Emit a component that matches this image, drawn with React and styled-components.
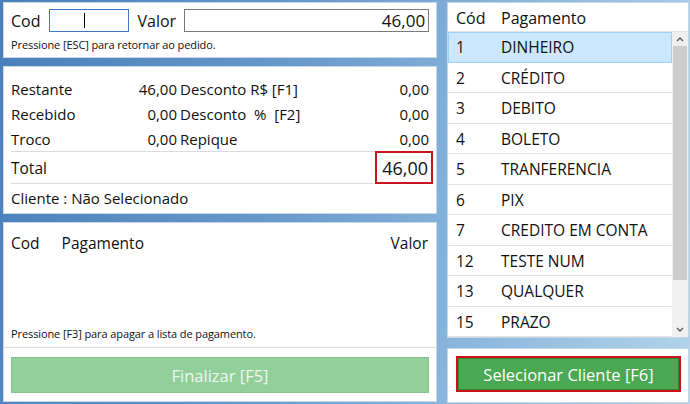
import React from "react";
import styled, { createGlobalStyle } from "styled-components";

const Global = createGlobalStyle`
  html, body { margin: 0; padding: 0; }
  body {
    width: 690px; height: 404px; overflow: hidden;
    font-family: "Open Sans", "Noto Sans", sans-serif;
    color: #111;
    background: linear-gradient(100deg, #4a7fba 0%, #6699cc 40%, #8cb8de 70%, #b3d4ea 100%);
  }
`;

const Screen = styled.div`
  display: grid;
  grid-template-columns: 434px 242px;
  column-gap: 10px;
  padding: 2px 0 0 3px;
  height: 402px;
  box-sizing: border-box;
`;

const Column = styled.div`
  display: flex;
  flex-direction: column;
  gap: ${(p) => p.$gap}px;
`;

const Panel = styled.div`
  background: #fff;
  border: 1px solid #c9d6e3;
  box-sizing: border-box;
  height: ${(p) => p.$h}px;
  display: flex;
  flex-direction: column;
`;

const InputRow = styled.div`
  display: flex;
  align-items: center;
  padding: 6px 0 0 7px;
  font-size: 16px;
`;

const Label = styled.span`
  font-size: 16px;
  margin-right: ${(p) => p.$mr || 0}px;
`;

const Field = styled.div`
  width: ${(p) => p.$w}px;
  height: 23px;
  box-sizing: border-box;
  border: 1px solid ${(p) => (p.$focus ? "#3b77c4" : "#7a7a7a")};
  display: flex;
  align-items: center;
  justify-content: ${(p) => (p.$focus ? "center" : "flex-end")};
  padding-right: 3px;
  font-size: 17px;
  margin-right: ${(p) => p.$mr || 0}px;
`;

const Caret = styled.div`
  width: 1px;
  height: 15px;
  background: #000;
  margin-right: 5px;
`;

const Hint = styled.div`
  font-size: 11px;
  padding-left: 7px;
  margin-top: ${(p) => p.$mt || 0}px;
  letter-spacing: -0.1px;
`;

const SummaryBody = styled.div`
  padding: 9px 7px 0 7px;
  display: flex;
  flex-direction: column;
`;

const SumRow = styled.div`
  display: grid;
  grid-template-columns: 70px 97px 1fr 60px;
  align-items: center;
  height: 25px;
  font-size: 15px;
`;

const Right = styled.span`
  text-align: right;
  padding-right: ${(p) => p.$pr || 0}px;
`;

const Left = styled.span`
  padding-left: ${(p) => p.$pl || 0}px;
  white-space: pre;
`;

const TotalRow = styled.div`
  display: flex;
  align-items: center;
  justify-content: space-between;
  height: 31px;
  border-top: 1px solid #dcdcdc;
  border-bottom: 1px solid #dcdcdc;
  font-size: 15.5px;
  margin-right: -4px;
`;

const TotalBox = styled.div`
  height: 33px;
  width: 58px;
  box-sizing: border-box;
  border: 2px solid #c8141e;
  background: #fff;
  font-size: 18px;
  display: flex;
  align-items: center;
  justify-content: flex-end;
  padding-right: 3px;
  margin: -1px 0;
`;

const ClientRow = styled.div`
  height: 28px;
  display: flex;
  align-items: center;
  font-size: 15px;
`;

const PayHeader = styled.div`
  display: flex;
  justify-content: space-between;
  padding: 9px 8px 0 7px;
  font-size: 15.5px;
`;

const HeadLeft = styled.div`
  display: flex;
  gap: 22px;
`;

const Spacer = styled.div`
  flex: 1;
`;

const Footer = styled.div`
  border-top: 1px solid #dcdcdc;
  padding: 9px 7px 8px 7px;
  margin-top: 6px;
  display: flex;
`;

const GreenButton = styled.div`
  flex: 1;
  height: 36px;
  box-sizing: border-box;
  display: flex;
  align-items: center;
  justify-content: center;
  font-size: 16.5px;
  color: ${(p) => (p.$disabled ? "#eef7ee" : "#fff")};
  background: ${(p) => (p.$disabled ? "#93cf9a" : "#4aa952")};
  border: ${(p) => (p.$disabled ? "1px solid #86c38d" : "2px solid #cf1018")};
  box-shadow: ${(p) => (p.$disabled ? "none" : "inset 0 0 0 1px #2f8a38")};
`;

const ListHeader = styled.div`
  display: flex;
  height: 31px;
  align-items: center;
  padding: 2px 0 0 8px;
  font-size: 16px;
  border-bottom: 1px solid #e4e4e4;
`;

const CodCell = styled.span`
  width: 45px;
  flex: none;
`;

const ListArea = styled.div`
  flex: 1;
  display: flex;
`;

const Rows = styled.div`
  flex: 1;
  display: flex;
  flex-direction: column;
`;

const Row = styled.div`
  height: 30.5px;
  box-sizing: border-box;
  display: flex;
  align-items: center;
  padding-left: 7px;
  font-size: 15.5px;
  border: 1px solid ${(p) => (p.$sel ? "#99d1ff" : "transparent")};
  border-bottom: 1px solid ${(p) => (p.$sel ? "#99d1ff" : "#e2e2e2")};
  background: ${(p) => (p.$sel ? "#cce8ff" : "#fff")};
`;

const Scrollbar = styled.div`
  width: 16px;
  display: flex;
  flex-direction: column;
  background: #f0f0f0;
`;

const Arrow = styled.div`
  height: 14px;
  display: flex;
  align-items: center;
  justify-content: center;
`;

const Track = styled.div`
  flex: 1;
  display: flex;
  flex-direction: column;
  padding: 0 1px;
`;

const Thumb = styled.div`
  height: 234px;
  background: #cdcdcd;
`;

const ButtonPanelBody = styled.div`
  padding: 7px 7px 6px 8px;
  display: flex;
  flex: 1;
`;

const Chevron = ({ up }) => (
  <svg width="8" height="6" viewBox="0 0 8 6">
    <path
      d={up ? "M1 5 L4 2 L7 5" : "M1 1 L4 4 L7 1"}
      fill="none"
      stroke="#555"
      strokeWidth="1.3"
    />
  </svg>
);

const payments = [
  ["1", "DINHEIRO"],
  ["2", "CRÉDITO"],
  ["3", "DEBITO"],
  ["4", "BOLETO"],
  ["5", "TRANFERENCIA"],
  ["6", "PIX"],
  ["7", "CREDITO EM CONTA"],
  ["12", "TESTE NUM"],
  ["13", "QUALQUER"],
  ["15", "PRAZO"],
];

export default function App() {
  return (
    <>
      <Global />
      <Screen>
        <Column $gap={8}>
          <Panel $h={56}>
            <InputRow>
              <Label $mr={8}>Cod</Label>
              <Field $w={80} $focus $mr={9}>
                <Caret />
              </Field>
              <Label $mr={8}>Valor</Label>
              <Field $w={245}>46,00</Field>
            </InputRow>
            <Hint $mt={5}>Pressione [ESC] para retornar ao pedido.</Hint>
          </Panel>
          <Panel $h={148}>
            <SummaryBody>
              <SumRow>
                <span>Restante</span>
                <Right $pr={1}>46,00</Right>
                <Left $pl={2}>Desconto R$ [F1]</Left>
                <Right>0,00</Right>
              </SumRow>
              <SumRow>
                <span>Recebido</span>
                <Right $pr={1}>0,00</Right>
                <Left $pl={2}>{"Desconto  %  [F2]"}</Left>
                <Right>0,00</Right>
              </SumRow>
              <SumRow>
                <span>Troco</span>
                <Right $pr={1}>0,00</Right>
                <Left $pl={2}>Repique</Left>
                <Right>0,00</Right>
              </SumRow>
              <TotalRow>
                <span>Total</span>
                <TotalBox>46,00</TotalBox>
              </TotalRow>
              <ClientRow>Cliente : Não Selecionado</ClientRow>
            </SummaryBody>
          </Panel>
          <Panel $h={180}>
            <PayHeader>
              <HeadLeft>
                <span>Cod</span>
                <span>Pagamento</span>
              </HeadLeft>
              <span>Valor</span>
            </PayHeader>
            <Spacer />
            <Hint>Pressione [F3] para apagar a lista de pagamento.</Hint>
            <Footer>
              <GreenButton $disabled>Finalizar [F5]</GreenButton>
            </Footer>
          </Panel>
        </Column>
        <Column $gap={10}>
          <Panel $h={336}>
            <ListHeader>
              <CodCell>Cód</CodCell>
              <span>Pagamento</span>
            </ListHeader>
            <ListArea>
              <Rows>
                {payments.map(([c, n], i) => (
                  <Row key={c} $sel={i === 0}>
                    <CodCell>{c}</CodCell>
                    <span>{n}</span>
                  </Row>
                ))}
              </Rows>
              <Scrollbar>
                <Arrow>
                  <Chevron up />
                </Arrow>
                <Track>
                  <Thumb />
                </Track>
                <Arrow>
                  <Chevron />
                </Arrow>
              </Scrollbar>
            </ListArea>
          </Panel>
          <Panel $h={55}>
            <ButtonPanelBody>
              <GreenButton>Selecionar Cliente [F6]</GreenButton>
            </ButtonPanelBody>
          </Panel>
        </Column>
      </Screen>
    </>
  );
}
